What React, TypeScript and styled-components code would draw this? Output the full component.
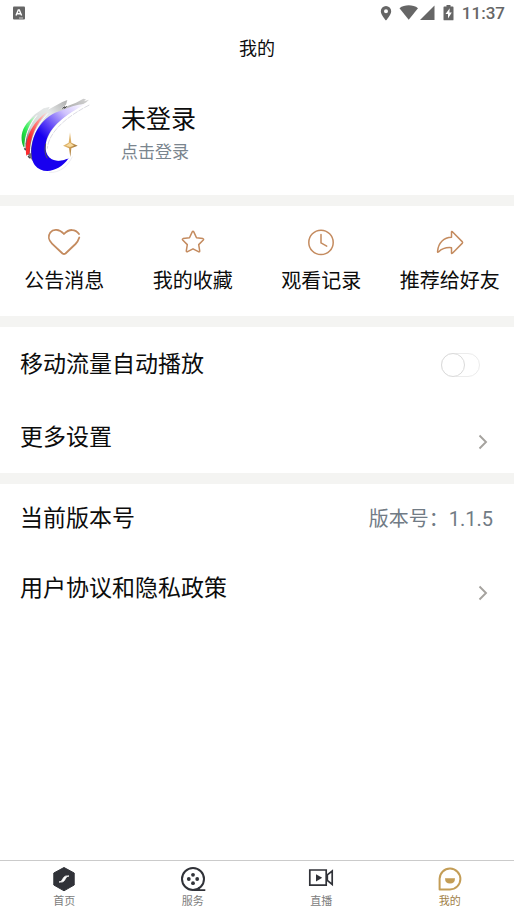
import React, { useState } from 'react';
import styled, { createGlobalStyle } from 'styled-components';

const GlobalStyle = createGlobalStyle`
  *, *::before, *::after { box-sizing: border-box; }
  body {
    margin: 0;
    background: #fff;
    color: #0c0c0c;
    font-family: Roboto, "Noto Sans CJK SC", sans-serif;
  }
  button, input { font: inherit; color: inherit; }
`;

const Screen = styled.div`
  display: flex;
  flex-direction: column;
  min-height: 100vh;
`;

const StatusBar = styled.div`
  display: flex;
  align-items: center;
  justify-content: space-between;
  height: 26px;
  padding: 0 9px 0 12px;
  color: #666;
  font-size: 17px;
  font-weight: 500;
  line-height: 26px;
`;

const StatusIcons = styled.div`
  display: flex;
  align-items: center;
`;

const Clock = styled.time`
  margin-left: 7px;
`;

const TitleBar = styled.header`
  display: flex;
  align-items: center;
  justify-content: center;
  height: 44px;
  padding-top: 2px;
`;

const Title = styled.h1`
  margin: 0;
  font-size: 18px;
  font-weight: 400;
  line-height: 24px;
`;

const Content = styled.main`
  flex: 1;
`;

const Profile = styled.button`
  display: flex;
  align-items: center;
  gap: 21px;
  width: 100%;
  height: 125px;
  padding: 4px 20px 0;
  border: 0;
  background: none;
  text-align: left;
  cursor: pointer;
`;

const ProfileText = styled.span`
  display: flex;
  flex-direction: column;
  padding-bottom: 2px;
`;

const ProfileName = styled.span`
  font-size: 25px;
  line-height: 36px;
`;

const ProfileHint = styled.span`
  color: #7a858e;
  font-size: 17px;
  line-height: 28px;
`;

const Divider = styled.div`
  height: 11px;
  background: #f4f4f2;
`;

const Shortcuts = styled.nav`
  display: grid;
  grid-template-columns: repeat(4, 1fr);
  height: 110px;
`;

const Shortcut = styled.button`
  display: flex;
  flex-direction: column;
  align-items: center;
  gap: 8px;
  padding: 20px 0 0;
  border: 0;
  background: none;
  color: #c48b5f;
  cursor: pointer;
`;

const ShortcutLabel = styled.span`
  color: #0c0c0c;
  font-size: 20px;
  line-height: 30px;
  white-space: nowrap;
`;

const Group = styled.section`
  display: flex;
  flex-direction: column;
`;

const rowHeights = { tall: '75px', medium: '71px', short: '69px' };

const Row = styled.div<{ $size: keyof typeof rowHeights }>`
  display: flex;
  align-items: center;
  justify-content: space-between;
  width: 100%;
  height: ${(p) => rowHeights[p.$size]};
  padding: 0 21px 0 20px;
  border: 0;
  background: none;
  font-size: 23px;
  line-height: 32px;
  text-align: left;
`;

const RowLink = styled(Row)`
  padding-right: 26px;
  cursor: pointer;

  svg { margin-top: 8px; }
`;

const SwitchRow = styled(Row)`
  padding-right: 34px;
`;

const Version = styled.span`
  color: #717b85;
  font-size: 20px;
`;

const Switch = styled.input`
  appearance: none;
  display: flex;
  width: 39px;
  height: 24px;
  margin: 0;
  border: 1px solid #ececec;
  border-radius: 12px;
  cursor: pointer;

  &::before {
    content: '';
    width: 24px;
    height: 24px;
    margin: -1px;
    border: 1px solid #dadada;
    border-radius: 50%;
    background: #fff;
  }

  &:checked {
    justify-content: flex-end;
    background: #c2a05e;
  }
`;

const TabBar = styled.nav`
  display: grid;
  grid-template-columns: repeat(4, 1fr);
  height: 54px;
  border-top: 1px solid #cbcbcb;
`;

const Tab = styled.a<{ $active?: boolean }>`
  display: flex;
  flex-direction: column;
  align-items: center;
  gap: 2px;
  padding-top: 5px;
  color: ${(p) => (p.$active ? '#a08048' : '#7c7c7c')};
  font-size: 11px;
  line-height: 16px;
  text-decoration: none;
`;

const InputBadge = () => (
  <svg width="13" height="14" viewBox="0 0 13 14" aria-hidden="true">
    <rect x="1" y="0.5" width="12" height="13" rx="1" fill="#666" />
    <path d="M4 9.5 6.3 4h1L9.6 9.5M4.9 7.8h3.8" fill="none" stroke="#fff" strokeWidth="1.4" />
    <path d="M7 12h4" stroke="#ccc" strokeWidth="1" />
  </svg>
);

const SignalIcons = () => (
  <svg width="75" height="20" viewBox="0 0 75 20" fill="#666" aria-hidden="true">
    <path fillRule="evenodd" d="M6 3a5.2 5.2 0 0 0-5.2 5.2C.8 12 6 17.5 6 17.5s5.200-5.500 5.200-9.300A5.200 5.200 0 0 0 6 3Zm0 3.300a2 2 0 1 1 0 4 2 2 0 0 1 0-4Z" />
    <path d="M19.500 5.200C24.500 1.400 33 1.400 38 5.200L28.700 16.800Z" />
    <path d="M54.500 2.500v14.500H40Z" />
    <path d="M66.500 2h4v1.600h2.200q.8 0 .8.800v12q0 .9-.8.900h-8.400q-.8 0-.8-.9v-12q0-.8.800-.8h2.200Z" />
    <path d="m69.700 5.200-4.200 5.800h2.500v4.500l3.800-6h-2.400Z" fill="#fff" />
  </svg>
);

const Logo = () => (
  <svg width="80" height="80" viewBox="30 30 240 240" aria-hidden="true">
    <defs>
      <linearGradient id="blue" x1="0.9" y1="0" x2="0.3" y2="0.75">
        <stop offset="0" stopColor="#faf8ff" />
        <stop offset="0.3" stopColor="#cfc2fd" />
        <stop offset="0.65" stopColor="#5a40f6" />
        <stop offset="0.85" stopColor="#1800ef" />
      </linearGradient>
      <linearGradient id="red" x1="1" y1="0" x2="0" y2="1">
        <stop offset="0" stopColor="#ffe3e0" />
        <stop offset="0.4" stopColor="#ff7a76" />
        <stop offset="0.7" stopColor="#fb2a2e" />
      </linearGradient>
      <linearGradient id="green" x1="1" y1="0" x2="0" y2="1">
        <stop offset="0" stopColor="#d6ffda" />
        <stop offset="0.6" stopColor="#2ae84e" />
        <stop offset="1" stopColor="#08ac25" />
      </linearGradient>
      <linearGradient id="silver" x1="1" y1="0" x2="0" y2="1">
        <stop offset="0" stopColor="#d4d4d4" />
        <stop offset="0.2" stopColor="#b4b4b4" />
        <stop offset="0.4" stopColor="#e5e8e8" />
        <stop offset="0.65" stopColor="#d3d8d7" />
        <stop offset="0.82" stopColor="#555" />
        <stop offset="1" stopColor="#ddd" />
      </linearGradient>
      <linearGradient id="gold" x1="0" y1="0" x2="1" y2="1">
        <stop offset="0" stopColor="#f4d89c" />
        <stop offset="0.5" stopColor="#d6a65a" />
        <stop offset="1" stopColor="#6e491e" />
      </linearGradient>
    </defs>
    <path d="M66 225C30 185 28 130 75 88l26-18 18-4-5 8 43-23 15-6-4 14-16 12 46-18 22-12 8 2-6 6 15-5-8 8C158 92 118 130 107 180c-6 24 0 36 8 45l-30 20Z" fill="url(#silver)" />
    <path d="M41 187C27 156 35 118 77 92c-17 22-32 52-33 93Z" fill="url(#green)" />
    <path d="M45 190c-2-38 14-72 36-99" fill="none" stroke="#fff" strokeWidth="3" />
    <path d="M49 212C43 164 64 112 113 80c-35 36-55 80-54 125Z" fill="url(#red)" />
    <path d="M61 205c0-42 18-82 53-120" fill="none" stroke="#fff" strokeWidth="3" />
    <path d="M65 212C60 148 98 92 156 76c20-9 40-17 72-20C166 90 118 125 108 172c-8 40 17 70 68 48-30 42-78 50-102 20-5-8-9-18-9-28Z" fill="url(#blue)" />
    <path d="M236 58c-65 33-119 79-124 129-1 28 21 46 62 30" fill="none" stroke="#fff" strokeWidth="6" />
    <path d="M238 60c-65 33-122 79-126 131" fill="none" stroke="#c8c8d3" strokeWidth="2" strokeDasharray="17 3" />
    <path d="M107 176c-4 18-2 33 5 44" fill="none" stroke="#555" strokeWidth="3" />
    <path d="M117 262c32 3 58-20 70-47" fill="none" stroke="#e4e4ea" strokeWidth="2" />
    <path d="m157 70 8-5-1 5 6-6" fill="none" stroke="#444" strokeWidth="3" />
    <path d="m54 214 7 6M43 190l4 5" fill="none" stroke="#444" strokeWidth="4" />
    <path d="m180 142 4 31 19 9-19 8-3 26-4-26-18-8 17-9Z" fill="url(#gold)" />
    <path d="m180 173-12 9 12 4 12-4Z" fill="#f7dba0" />
  </svg>
);

const stroke = { fill: 'none', stroke: 'currentColor', strokeLinejoin: 'round' as const, strokeLinecap: 'round' as const };

const HeartIcon = () => (
  <svg width="34" height="32" viewBox="0 0 34 32" {...stroke} strokeWidth="1.800" aria-hidden="true">
    <path d="M32 8C28.500 2.800 22 2.600 17 8 12 2.700 6 3 3.300 6.500.7 10 1.700 14.500 5 17.600L15.500 27.500Q17 28.500 18.500 27.500L28.500 18Q31 15.500 32.300 11.500" />
  </svg>
);

const StarIcon = () => (
  <svg width="26" height="32" viewBox="0 0 26 32" {...stroke} strokeWidth="1.500" aria-hidden="true">
    <path d="M12.200 5.900q.8-1.200 1.600 0l2.700 5.800 6.400.9q1.200.4.4 1.400l-4.600 4.600 1 6.300q0 1.300-1.300.8L13 22.800l-5.400 2.900q-1.300.4-1.300-.8l1-6.300-4.600-4.600q-.8-1 .4-1.400l6.400-.9Z" />
  </svg>
);

const ClockIcon = () => (
  <svg width="28" height="32" viewBox="0 0 28 32" {...stroke} strokeWidth="1.500" aria-hidden="true">
    <circle cx="14" cy="16.400" r="12.200" />
    <path d="M14 8.400v8.500l5.700 3.200" />
  </svg>
);

const ShareIcon = () => (
  <svg width="28" height="32" viewBox="0 0 28 32" {...stroke} strokeWidth="1.500" aria-hidden="true">
    <path d="M15.500 6q0-1 .9-.3l10 10.200q.5.600 0 1.200L16.400 27.200q-.9.700-.9-.3v-5.200C10 21.200 6 22.500 2.500 26q-1.200.9-.9-.9C2.500 16.500 8 11.500 15.500 11.300Z" />
  </svg>
);

const Chevron = () => (
  <svg width="10" height="16" viewBox="0 0 10 16" fill="none" stroke="#a5a29e" strokeWidth="1.900" aria-hidden="true">
    <path d="m1.500 1.500 6.500 6.500-6.500 6.500" />
  </svg>
);

const HomeIcon = () => (
  <svg width="26" height="26" viewBox="0 0 26 26" aria-hidden="true">
    <path d="M13 1.500 23.200 7v12L13 24.800 2.800 19V7Z" fill="#303238" stroke="#303238" strokeLinejoin="round" />
    <path d="M18 10c-4.500-.5-5 .8-6.400 3.200-1 1.700-1.700 2.500-3.600 2.800 4.500.5 5-.8 6.400-3.200 1-1.700 1.700-2.500 3.600-2.800Z" fill="#fff" stroke="#fff" strokeWidth="0.800" />
  </svg>
);

const ServiceIcon = () => (
  <svg width="26" height="26" viewBox="0 0 26 26" fill="#303238" aria-hidden="true">
    <circle cx="13" cy="13" r="11" fill="none" stroke="#303238" strokeWidth="2" />
    <circle cx="13" cy="8.800" r="1.900" />
    <circle cx="13" cy="17.200" r="1.900" />
    <circle cx="8.800" cy="13" r="1.900" />
    <circle cx="17.200" cy="13" r="1.900" />
    <path d="M14 24.200h11.300M19 21v3.200" stroke="#303238" strokeWidth="1.700" />
  </svg>
);

const LiveIcon = () => (
  <svg width="26" height="26" viewBox="0 0 26 26" fill="none" stroke="#303238" strokeWidth="1.700" aria-hidden="true">
    <path d="M1.800 4h16.400v15.200H1.800ZM24.200 5v13.500l-4.900-4.200V8.800Z" />
    <path d="m8 8.200 6.200 3.600L8 15.400Z" fill="#303238" stroke="none" />
  </svg>
);

const MineIcon = () => (
  <svg width="26" height="26" viewBox="0 0 26 26" aria-hidden="true">
    <path d="M2.600 23.400V12.800a10.400 10.400 0 1 1 10.400 10.600Z" fill="none" stroke="#c39d56" strokeWidth="2" strokeLinejoin="round" />
    <path d="M8 12.300h10q0 5.200-5 5.200t-5-5.200Z" fill="#c39d56" />
  </svg>
);

const shortcuts = [
  { label: '公告消息', Icon: HeartIcon },
  { label: '我的收藏', Icon: StarIcon },
  { label: '观看记录', Icon: ClockIcon },
  { label: '推荐给好友', Icon: ShareIcon },
];

const tabs = [
  { label: '首页', Icon: HomeIcon },
  { label: '服务', Icon: ServiceIcon },
  { label: '直播', Icon: LiveIcon },
  { label: '我的', Icon: MineIcon, active: true },
];

export default function App() {
  const [autoplay, setAutoplay] = useState(false);

  return (
    <Screen>
      <GlobalStyle />
      <StatusBar>
        <InputBadge />
        <StatusIcons>
          <SignalIcons />
          <Clock>11:37</Clock>
        </StatusIcons>
      </StatusBar>
      <TitleBar>
        <Title>我的</Title>
      </TitleBar>
      <Content>
        <Profile type="button">
          <Logo />
          <ProfileText>
            <ProfileName>未登录</ProfileName>
            <ProfileHint>点击登录</ProfileHint>
          </ProfileText>
        </Profile>
        <Divider />
        <Shortcuts>
          {shortcuts.map(({ label, Icon }) => (
            <Shortcut type="button" key={label}>
              <Icon />
              <ShortcutLabel>{label}</ShortcutLabel>
            </Shortcut>
          ))}
        </Shortcuts>
        <Divider />
        <Group>
          <SwitchRow $size="tall">
            <label htmlFor="autoplay">移动流量自动播放</label>
            <Switch
              id="autoplay"
              type="checkbox"
              role="switch"
              checked={autoplay}
              onChange={(e) => setAutoplay(e.target.checked)}
            />
          </SwitchRow>
          <RowLink as="button" $size="medium">
            更多设置
            <Chevron />
          </RowLink>
        </Group>
        <Divider />
        <Group>
          <Row $size="short">
            当前版本号
            <Version>版本号：1.1.5</Version>
          </Row>
          <RowLink as="button" $size="medium">
            用户协议和隐私政策
            <Chevron />
          </RowLink>
        </Group>
      </Content>
      <TabBar>
        {tabs.map(({ label, Icon, active }) => (
          <Tab href="#" key={label} $active={active} aria-current={active ? 'page' : undefined}>
            <Icon />
            {label}
          </Tab>
        ))}
      </TabBar>
    </Screen>
  );
}
